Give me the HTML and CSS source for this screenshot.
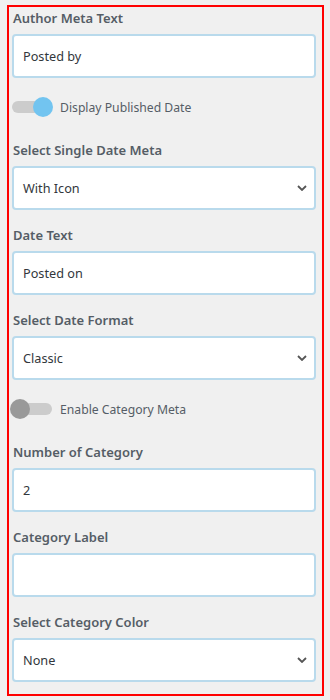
FILE: index.html
```html
<!DOCTYPE html>
<html lang="en">
<head>
    <meta charset="UTF-8">
    <meta name="viewport" content="width=device-width, initial-scale=1.0">
    <title>Post Meta Settings</title>
    <link rel="stylesheet" href="styles.css">
</head>
<body>
    <div class="meta-panel">
        <div class="field">
            <label class="field-label">Author Meta Text</label>
            <input class="text-input" type="text" value="Posted by">
        </div>

        <div class="toggle-row">
            <span class="toggle on"><span class="knob"></span></span>
            <span class="toggle-label">Display Published Date</span>
        </div>

        <div class="field">
            <label class="field-label">Select Single Date Meta</label>
            <div class="select-box">
                <span>With Icon</span>
                <svg class="chevron" width="10" height="6" viewBox="0 0 10 6"><path d="M1 1l4 4 4-4" fill="none" stroke="#555" stroke-width="1.8"/></svg>
            </div>
        </div>

        <div class="field">
            <label class="field-label">Date Text</label>
            <input class="text-input" type="text" value="Posted on">
        </div>

        <div class="field">
            <label class="field-label">Select Date Format</label>
            <div class="select-box">
                <span>Classic</span>
                <svg class="chevron" width="10" height="6" viewBox="0 0 10 6"><path d="M1 1l4 4 4-4" fill="none" stroke="#555" stroke-width="1.8"/></svg>
            </div>
        </div>

        <div class="toggle-row">
            <span class="toggle"><span class="knob"></span></span>
            <span class="toggle-label">Enable Category Meta</span>
        </div>

        <div class="field">
            <label class="field-label">Number of Category</label>
            <input class="text-input" type="text" value="2">
        </div>

        <div class="field">
            <label class="field-label">Category Label</label>
            <input class="text-input" type="text" value="">
        </div>

        <div class="field">
            <label class="field-label">Select Category Color</label>
            <div class="select-box">
                <span>None</span>
                <svg class="chevron" width="10" height="6" viewBox="0 0 10 6"><path d="M1 1l4 4 4-4" fill="none" stroke="#555" stroke-width="1.8"/></svg>
            </div>
        </div>
    </div>
</body>
</html>
```

FILE: styles.css
```css
body {
    margin: 0;
    padding: 5px 0 0 7px;
    background: #f0f0f0;
    font-family: "Segoe UI", "Noto Sans", sans-serif;
}
.meta-panel {
    width: 304px;
    border: 2px solid #ff0000;
    padding: 1px 6px 0 3px;
}
.field {
    display: flex;
    flex-direction: column;
    margin-bottom: 15px;
}
.field:last-child {
    margin-bottom: 12px;
}
.field-label {
    font-size: 13px;
    font-weight: 600;
    line-height: 20px;
    color: #555d66;
    margin: 0 0 6px 1px;
}
.text-input,
.select-box {
    box-sizing: border-box;
    height: 44px;
    width: 304px;
    border: 2px solid #b9daec;
    border-radius: 4px;
    background: #fff;
    padding: 0 7px 0 9px;
    font-family: inherit;
    font-size: 12.7px;
    color: #32373c;
    outline: none;
}
.select-box {
    display: flex;
    align-items: center;
    justify-content: space-between;
}
.toggle-row {
    display: flex;
    align-items: center;
    height: 28px;
    margin-bottom: 19px;
}
.toggle {
    position: relative;
    width: 40px;
    height: 12px;
    border-radius: 6px;
    background: #cccccc;
    margin-right: 8px;
}
.knob {
    position: absolute;
    top: -4px;
    left: -2px;
    width: 20px;
    height: 20px;
    border-radius: 50%;
    background: #999999;
}
.toggle.on .knob {
    left: 21px;
    background: #72c4f0;
}
.toggle-label {
    font-size: 12.2px;
    color: #555d66;
}
```
